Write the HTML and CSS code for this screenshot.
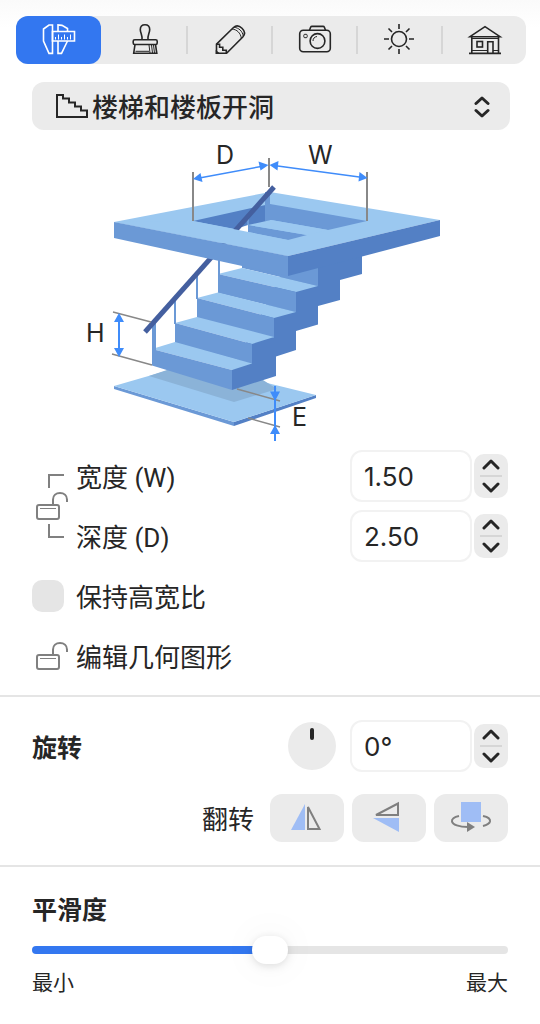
FILE: index.html
```html
<!DOCTYPE html>
<html lang="zh-CN">
<head>
    <meta charset="UTF-8">
    <meta name="viewport" content="width=device-width, initial-scale=1.0">
    <title>楼梯和楼板开洞</title>
    <link rel="stylesheet" href="styles.css">
</head>
<body>
    <nav class="tabs">
        <button class="tab active" type="button" aria-label="尺寸">
            <svg width="41" height="48" viewBox="0 0 41 48">
                <path d="M14.5 9 H11 L5.5 13 V25 L11 37.4 H14.5 Z"/>
                <path d="M20 15.5 V9 L24 9.4 L29.5 12.5 V15.5 M20 25 V37.4 H23.5 L29.5 25"/>
                <path d="M14.5 15.5 H36.5 V25 H14.5 Z"/>
                <path class="thin" d="M17.5 23.5 V21 M20.5 23.5 V18.5 M23.5 23.5 V21 M26.5 23.5 V18.5 M29.5 23.5 V21 M32.5 23.5 V18.5"/>
            </svg>
        </button>
        <button class="tab" type="button" aria-label="材质">
            <svg width="41" height="48" viewBox="0 0 41 48">
                <path d="M19 23.5 C19.5 19 17.3 17 17.3 13.5 C17.3 10.5 19.2 8.7 22 8.7 C24.8 8.7 26.7 10.5 26.7 13.5 C26.7 17 24.5 19 25 23.5"/>
                <rect x="10.2" y="23.7" width="24" height="4.8" rx="1.5"/>
                <path d="M12 28.5 L10.7 37.3 H33.8 L32.5 28.5"/>
                <path class="thin" d="M26 29 L27 37 M28.5 29 L29.5 37 M30.5 29 L31.5 37 M12.5 35.3 H26"/>
            </svg>
        </button>
        <button class="tab" type="button" aria-label="编辑">
            <svg width="41" height="48" viewBox="0 0 41 48">
                <path d="M8.5 37.3 V28.2 L25.5 11.5 C28.5 8.8 31.5 9.8 34 12.3 C36.8 15 37.2 18.3 34.8 21 L18.6 37.3 Z"/>
                <path d="M8.7 28.2 H11.6 V31.3 H14.8 V34.2 H18.3 V37"/>
                <path class="thin" d="M24 13 C29 13.5 32.5 17 33.3 22 M26 11.2 C31 12 34.3 15 35.3 20"/>
                <path class="ink" d="M8.5 35.5 L10.5 37.3 H8.5 Z"/>
            </svg>
        </button>
        <button class="tab" type="button" aria-label="相机">
            <svg width="41" height="48" viewBox="0 0 41 48">
                <path d="M16.5 14.3 L17.6 11.3 Q18 10.4 19 10.4 H30 Q31 10.4 31.4 11.3 L32.5 14.3"/>
                <rect x="6.7" y="14.3" width="30.6" height="21.4" rx="3.5"/>
                <circle cx="24.5" cy="25" r="7.4"/>
                <rect class="thin" x="10.8" y="18.3" width="3.4" height="3.4" rx="1"/>
                <path class="thin" d="M20 25 C20 22.5 21.5 20.8 24 20.5"/>
            </svg>
        </button>
        <button class="tab" type="button" aria-label="光源">
            <svg width="41" height="48" viewBox="0 0 41 48">
                <circle cx="21" cy="23" r="7.5"/>
                <path d="M21 8 V13 M21 33 V38 M6 23 H11 M31 23 H36 M10.500 12.500 L14 16 M28 30 L31.500 33.500 M10.500 33.500 L14 30 M28 16 L31.500 12.500"/>
            </svg>
        </button>
        <button class="tab" type="button" aria-label="建筑">
            <svg width="41" height="48" viewBox="0 0 41 48">
                <path d="M7 20.7 L22 10.7 L37 20.7 Z M8.8 21 V37 M35.5 21 V37 M6 37.4 H38"/>
                <rect x="14" y="25.5" width="5.5" height="5.5"/>
                <path d="M24.7 37 V25.7 H30 V37"/>
                <path class="thin" d="M9 22.5 H35.5 M9 34.5 H24.5 M30 34.5 H35.5"/>
            </svg>
        </button>
    </nav>

    <main>
        <div class="picker">
            <svg class="picker-icon" width="32" height="26" viewBox="0 0 32 26">
                <path d="M1 2 H7 V5.5 H13 V9.5 H19 V13.5 H25 V17.5 H31 V24 H1 Z"/>
            </svg>
            <select aria-label="开洞类型">
                <option>楼梯和楼板开洞</option>
            </select>
            <svg class="picker-arrows" width="16" height="22" viewBox="0 0 16 22">
                <path d="M2 7.5 L8 2 L14 7.5 M2 14.5 L8 20 L14 14.5"/>
            </svg>
        </div>

        <svg class="diagram" viewBox="0 138 540 306" role="img" aria-label="楼梯尺寸示意图">
            <!-- floor plate -->
            <path class="mid" d="M114 386 L234 422 V426 L114 389 Z"/>
            <path class="dark" d="M234 422 L316 395 V398 L234 426 Z"/>
            <path class="light" d="M114 386 L190 364 L316 395 L234 422 Z"/>
            <path class="shade" d="M149 376 L170 369 L263 380 L277 389 L234 402 Z"/>

            <!-- stairs -->
            <path class="dark" d="M232 390 L276 376 V356.5 L296 350 V331 L318 324.5 V306 L340 300 V280 L362 274 V250 L288 262 L232 370 Z"/>
            <path class="mid" d="M242 262 L288 270 L318 267 V286 L242 268 Z"/>
            <path class="light" d="M218 274 L242 268 L318 286 L296 292 Z"/>
            <path class="mid" d="M218 274 L296 292 V312 L218 293 Z"/>
            <path class="light" d="M197 298 L218 292.5 L296 312 L274 318 Z"/>
            <path class="mid" d="M197 298 L274 318 V338 L197 318 Z"/>
            <path class="light" d="M175 323 L197 317 L274 337 L252 344 Z"/>
            <path class="mid" d="M175 323 L252 344 V364 L175 343 Z"/>
            <path class="light" d="M152 349 L175 342 L252 363.5 L232 370 Z"/>
            <path class="mid" d="M152 349 L232 370 V390 L152 365.5 Z"/>
            <path class="mid" d="M152 323 H156 V350 H152 Z M174 299 H176 V324 H174 Z M196 275 H198 V299 H196 Z M218 258 H220 V275 H218 Z"/>

            <!-- slab with opening -->
            <path class="light" d="M114 222 L270 192 L440 220 L288 256 Z"/>
            <path class="dark" d="M193 221 L270 204 V221 L235 229 Z"/>
            <path class="mid" d="M270 204 L367 221 L328 230 L271 220 L266 221 V205 Z"/>
            <path class="mid" d="M248 225 L307 235 L288 240 L248 232 Z"/>
            <path class="hole" d="M234 229.5 L248 225 V233 Z"/>
            <path class="mid" d="M265 192 H270 V221 H265 Z M247 216 H249 V225 H247 Z"/>
            <path class="light" d="M248 225 L271 220 L328 230 L307 235 Z"/>
            <path class="rail" d="M274 187 L145 332"/>
            <path class="light" d="M114 222 L193 221 L288 240 V256 Z"/>
            <path class="mid" d="M114 222 L288 256 V276 L114 238 Z"/>
            <path class="dark" d="M288 256 L440 220 V236 L288 276 Z"/>

            <!-- dimension lines -->
            <path class="guide" d="M193 172 V221 M269 158 V187 M367 172 V221"/>
            <path class="guide slim" d="M113 312 L151 322 M112 354 L152 365 M237 389 L280 401 M248 418 L280 427"/>
            <path class="arrow slim" d="M198 178.2 L264 166 M274 165.5 L363 177.5"/>
            <path class="arrow" d="M119 318 V351 M275 386 V441"/>
            <path class="head" d="M193 179 L200.5 173 L202.5 182 Z M268.5 165 L258.5 161.5 L260.5 170.5 Z M269.5 165 L278.5 161 L277.5 170.5 Z M367.5 178 L359.5 172 L358.5 181.5 Z"/>
            <path class="head" d="M119 313 L114 322 H124 Z M119 357 L114 348 H124 Z M275 401 L270 391.5 H280 Z M275 425 L270 434 H280 Z"/>
            <text x="216" y="164">D</text>
            <text x="308" y="164">W</text>
            <text x="86" y="342">H</text>
            <text x="292" y="426">E</text>
        </svg>

        <div class="dimensions">
            <button class="link-lock" type="button" aria-label="锁定宽度和深度">
                <svg class="lock" width="36" height="66" viewBox="0 0 36 66">
                    <path d="M32 2 H17 V15 M17 51 V64 H32"/>
                    <rect x="5" y="32" width="22" height="14" rx="2"/>
                    <path d="M21 32 V26.5 C21 22.5 24 20 28 20 C32 20 35 22.5 35 26.5 V29"/>
                    <path class="thin" d="M8 35.5 H24"/>
                </svg>
            </button>
            <label class="text" for="width">宽度 (W)</label>
            <input class="field" id="width" type="text" value="1.50">
            <div class="stepper">
                <button type="button" aria-label="增加宽度"><svg width="18" height="11" viewBox="0 0 18 11"><path d="M2 9 L9 2 L16 9"/></svg></button>
                <button type="button" aria-label="减少宽度"><svg width="18" height="11" viewBox="0 0 18 11"><path d="M2 2 L9 9 L16 2"/></svg></button>
            </div>
            <label class="text" for="depth">深度 (D)</label>
            <input class="field" id="depth" type="text" value="2.50">
            <div class="stepper">
                <button type="button" aria-label="增加深度"><svg width="18" height="11" viewBox="0 0 18 11"><path d="M2 9 L9 2 L16 9"/></svg></button>
                <button type="button" aria-label="减少深度"><svg width="18" height="11" viewBox="0 0 18 11"><path d="M2 2 L9 9 L16 2"/></svg></button>
            </div>
        </div>

        <div class="option">
            <input class="checkbox" id="ratio" type="checkbox">
            <label class="text" for="ratio">保持高宽比</label>
        </div>
        <button class="option" type="button">
            <svg class="lock" width="36" height="28" viewBox="0 0 36 28">
                <rect x="5" y="13" width="22" height="14" rx="2"/>
                <path d="M21 13 V7.5 C21 3.5 24 1 28 1 C32 1 35 3.5 35 7.5 V10"/>
                <path class="thin" d="M8 16.5 H24"/>
            </svg>
            <span class="text">编辑几何图形</span>
        </button>

        <section class="rotation">
            <div class="row">
                <label class="title text" for="angle">旋转</label>
                <button class="dial" type="button" aria-label="旋转角度"></button>
                <input class="field" id="angle" type="text" value="0°">
                <div class="stepper">
                    <button type="button" aria-label="增加角度"><svg width="18" height="11" viewBox="0 0 18 11"><path d="M2 9 L9 2 L16 9"/></svg></button>
                    <button type="button" aria-label="减少角度"><svg width="18" height="11" viewBox="0 0 18 11"><path d="M2 2 L9 9 L16 2"/></svg></button>
                </div>
            </div>
            <div class="flip">
                <span class="text">翻转</span>
                <button type="button" aria-label="水平翻转">
                    <svg width="74" height="48" viewBox="0 0 74 48">
                        <path class="fill" d="M21 36 L35 10 V36 Z"/>
                        <path d="M38 13 V35 H49.5 Z"/>
                    </svg>
                </button>
                <button type="button" aria-label="垂直翻转">
                    <svg width="74" height="48" viewBox="0 0 74 48">
                        <path class="fill" d="M21 24 H47 V38 Z"/>
                        <path d="M24 21 L46 9.5 V21 Z"/>
                    </svg>
                </button>
                <button type="button" aria-label="前后翻转">
                    <svg width="74" height="48" viewBox="0 0 74 48">
                        <path class="fill" d="M27 8 H47 V28 H27 Z"/>
                        <path d="M25 22 C20 23 17.5 25 18 27.5 C18.5 30.5 25 33 34 33 M49 22 C54 23 56.5 25 56 27.5 C55.5 29.5 53 31 49 32"/>
                        <path class="tip" d="M33 28 L41 33 L33 38 Z"/>
                    </svg>
                </button>
            </div>
        </section>

        <section class="smoothness">
            <label class="title" for="smooth">平滑度</label>
            <input class="slider" id="smooth" type="range" min="0" max="100" value="50">
            <div class="scale">
                <span>最小</span>
                <span>最大</span>
            </div>
        </section>
    </main>
</body>
</html>
```

FILE: styles.css
```css
* {
    box-sizing: border-box;
}
body {
    font-family: Inter, "Noto Sans CJK SC", sans-serif;
    font-size: 26px;
    line-height: 36px;
    margin: 0;
    padding: 16px 0;
    color: #262626;
    background: white linear-gradient(#fafafa, white) no-repeat top / 100% 28px;
}
button, input, select {
    font: inherit;
    color: inherit;
    margin: 0;
    padding: 0;
    border: none;
    background: none;
}
button, select {
    cursor: pointer;
}
svg {
    display: block;
    fill: none;
    stroke: #262626;
    stroke-width: 2;
}

/* toolbar */
.tabs {
    display: flex;
    margin: 0 14px 0 16px;
    background: #ebebeb;
    border-radius: 12px;
}
.tab {
    flex: 1;
    height: 48px;
    display: flex;
    justify-content: center;
    align-items: center;
    position: relative;
}
.tab svg {
    stroke-width: 1.6;
}
.tab .thin {
    stroke-width: 1;
}
.tab .ink {
    fill: #262626;
}
.tab.active {
    background: #3377f0;
    border-radius: 12px;
}
.tab.active svg {
    stroke: white;
}
.tab:nth-child(n+3)::before {
    content: "";
    position: absolute;
    left: 0;
    top: 10px;
    bottom: 10px;
    width: 2px;
    background: #d6d6d6;
}

/* type picker */
.picker {
    position: relative;
    margin: 18px 30px 8px 32px;
}
.picker select {
    display: block;
    width: 100%;
    height: 48px;
    padding: 4px 60px 0;
    border-radius: 12px;
    background: #ebebeb;
    font-weight: 500;
    appearance: none;
}
.picker svg {
    position: absolute;
    pointer-events: none;
}
.picker-icon {
    left: 24px;
    top: 11px;
}
.picker-arrows {
    right: 20px;
    top: 14px;
    stroke-width: 3;
    stroke-linecap: round;
    stroke-linejoin: round;
}

/* stairs drawing */
.diagram {
    width: 100%;
    stroke: none;
}
.diagram text {
    font-size: 25px;
    fill: #262626;
}
.light {
    fill: #9bc8f0;
}
.mid {
    fill: #6b99d6;
}
.dark {
    fill: #5380c5;
}
.shade {
    fill: #8bb3d8;
}
.hole {
    fill: white;
}
.rail {
    stroke: #445f9f;
    stroke-width: 5;
}
.guide {
    stroke: #888;
    stroke-width: 2;
}
.arrow {
    stroke: #3f8cfa;
    stroke-width: 2;
}
.slim {
    stroke-width: 1.5;
}
.head {
    fill: #3f8cfa;
}

/* fields */
.text {
    padding-top: 4px;
}
.dimensions {
    display: grid;
    grid-template-columns: 42px 1fr 122px 34px;
    grid-auto-rows: 60px;
    column-gap: 2px;
    align-items: center;
    margin: 2px 32px 0;
}
.dimensions label {
    font-family: Roboto, "Noto Sans CJK SC", sans-serif;
}
.link-lock {
    grid-row: span 2;
}
.lock {
    stroke: #808080;
}
.lock .thin {
    stroke-width: 1;
}
.field {
    width: 122px;
    height: 52px;
    padding: 0 12px;
    border: 2px solid #f2f2f2;
    border-radius: 12px;
    background: white;
}
.stepper {
    width: 34px;
    height: 44px;
    display: flex;
    flex-direction: column;
    align-items: center;
    background: #ebebeb;
    border-radius: 10px;
}
.stepper button {
    flex: 1;
    width: 22px;
    display: flex;
    justify-content: center;
    align-items: center;
}
.stepper button + button {
    border-top: 2px solid #d6d6d6;
}
.stepper svg {
    stroke-width: 3;
    stroke-linecap: round;
    stroke-linejoin: round;
}
.option {
    display: flex;
    align-items: center;
    height: 60px;
    margin: 0 32px;
}
.option .lock {
    margin-right: 8px;
}
.checkbox {
    appearance: none;
    width: 32px;
    height: 32px;
    margin-right: 12px;
    border-radius: 10px;
    background: #e5e5e5;
}
.checkbox:checked {
    background: #3377f0;
}
.title {
    font-size: 25px;
    font-weight: bold;
}

/* rotation */
.rotation {
    margin-top: 9px;
    padding: 19px 32px 23px;
    border-top: 2px solid #e5e5e5;
    border-bottom: 2px solid #e5e5e5;
}
.row {
    display: flex;
    align-items: center;
    height: 60px;
    gap: 2px;
}
.row .title {
    flex: 1;
}
.dial {
    width: 48px;
    height: 48px;
    margin-right: 12px;
    padding-top: 6px;
    border-radius: 50%;
    background: #ebebeb;
    display: flex;
    justify-content: center;
    align-items: flex-start;
}
.dial::before {
    content: "";
    width: 4px;
    height: 12px;
    border-radius: 2px;
    background: #262626;
}
.flip {
    display: flex;
    justify-content: flex-end;
    align-items: center;
    gap: 8px;
    margin-top: 18px;
}
.flip span {
    margin-right: 8px;
}
.flip button {
    width: 74px;
    height: 48px;
    border-radius: 12px;
    background: #ebebeb;
}
.flip svg {
    stroke: #7f7f7f;
}
.flip .fill {
    fill: #9fbdf5;
    stroke: none;
}
.flip .tip {
    fill: #7f7f7f;
    stroke: none;
}

/* smoothness */
.smoothness {
    padding: 25px 32px 0;
}
.smoothness .title {
    display: block;
}
.slider {
    appearance: none;
    display: block;
    width: 100%;
    height: 28px;
    margin: 8px 0 1px;
}
.slider::-webkit-slider-runnable-track {
    height: 8px;
    border-radius: 4px;
    background: linear-gradient(to right, #3377f0 50%, #e5e5e5 50%);
}
.slider::-webkit-slider-thumb {
    appearance: none;
    width: 36px;
    height: 28px;
    margin-top: -10px;
    border-radius: 14px;
    background: white;
    box-shadow: 0 2px 8px rgba(0, 0, 0, 0.12), 0 0 40px rgba(0, 0, 0, 0.06);
}
.scale {
    display: flex;
    justify-content: space-between;
    font-size: 21px;
}
```
